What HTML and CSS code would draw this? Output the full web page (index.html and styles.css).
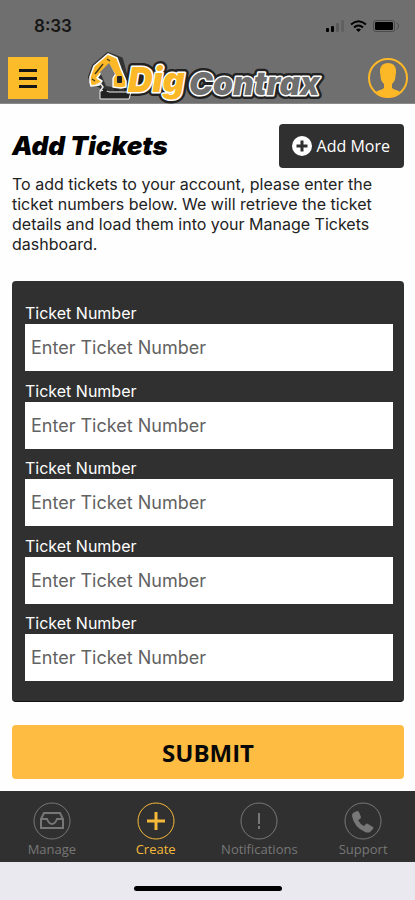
FILE: index.html
```html
<!DOCTYPE html>
<html lang="en">
<head>
<meta charset="utf-8">
<meta name="viewport" content="width=device-width, initial-scale=1">
<title>Add Tickets</title>
<link rel="stylesheet" href="styles.css">
</head>
<body>
<header class="header">
  <div class="status">
    <span class="time">8:33</span>
    <svg class="status-icons" viewBox="0 0 76 16" aria-hidden="true">
      <rect x="1" y="10" width="3" height="4" rx="1"/>
      <rect x="6" y="8" width="3" height="6" rx="1"/>
      <rect x="11" y="5" width="3" height="9" rx="1" fill="#5a5a5a"/>
      <rect x="16" y="2" width="3" height="12" rx="1" fill="#606060"/>
      <g fill="none" stroke="#000" stroke-width="2"><path d="M26 6.500q7.500-6.500 15 0"/><path d="M29 9.500q4.500-4 9 0"/></g>
      <path d="M31 11.500q2.500-2 5 0L33.500 14z"/>
      <rect x="48.500" y="2.500" width="21" height="11" rx="2" fill="none" stroke="#4c4c4c"/>
      <rect x="50" y="4" width="18" height="8" rx="1"/>
      <path d="M71.500 4.500q4 3.500 0 7" fill="none" stroke="#4c4c4c"/>
    </svg>
  </div>
  <div class="brand-bar">
    <button class="menu" type="button" aria-label="Menu">
      <svg viewBox="0 0 40 42"><path d="M11 13.500h18M11 21.500h18M11 29.500h18" stroke="#151515" stroke-width="3"/></svg>
    </button>
    <svg class="logo" viewBox="0 0 244 52" role="img" aria-label="DigContrax">
      <g stroke-linejoin="round">
        <path d="M4 25L8 14 22 2l13 5 7 26v10H16v-8l-10-6z" fill="#333" stroke="#333" stroke-width="4"/>
      </g>
      <g class="logo-outline"><text x="42" y="40" class="logo-dig">Dig</text><text x="103" y="43" class="logo-contrax">Contrax</text></g>
      <g stroke-linejoin="round">
        <path d="M14 39l5-1 4 2h22l-2 7H14z" fill="#222" stroke="#eee" stroke-width="1"/>
        <path d="M4 25L8 14 22 2l9 4 4 11 5 12v6l-5 1-8-1v-9l2-3-6-10-9 9-3 4 5 3-3 4-8 1-1-4z" fill="#fcb827" stroke="#fff" stroke-width="1.500"/>
        <path d="M14 20l9-9 6 11-3 4v9l-6-1-2-5z" fill="#777"/>
        <path d="M9 22l8-10M21 7l3 2M6 27l3 2" fill="none" stroke="#4a3b1d" stroke-width="1.500"/>
        <path d="M32 25h3v5h-3z" fill="#222" stroke="#222" stroke-width="2"/>
        <path d="M10 33l4-2 3 4-3 4" fill="none" stroke="#eee" stroke-width="1.500"/>
        <path d="M17 37h4v2h-4zM28 37h5v2h-5z" fill="#222"/>
      </g>
      <text x="42" y="40" class="logo-dig">Dig</text>
      <text x="103" y="43" class="logo-contrax">Contrax</text>
    </svg>
    <button class="profile" type="button" aria-label="Profile">
      <svg viewBox="0 0 42 42"><circle cx="21" cy="21" r="19" fill="none" stroke="#fcb827" stroke-width="2"/><path d="M21 6c-6 0-8 4-8 8 0 2 0 3 .5 4 0 5 1.500 7 3.500 9v4c-2 2-6 2-8 4q5 5 12 5t12-5c-2-2-6-2-8-4v-4c2-2 3.500-4 3.500-9 .500-1 .500-2 .500-4 0-4-2-8-8-8z" fill="#fcb827"/></svg>
    </button>
  </div>
</header>
<main class="main">
  <div class="title-row">
    <h1>Add Tickets</h1>
    <button class="add" type="button">
      <svg viewBox="0 0 20 20"><circle cx="10" cy="10" r="10" fill="#fff"/><path d="M10 4.500v11M4.500 10h11" stroke="#303030" stroke-width="3"/></svg>
      Add More
    </button>
  </div>
  <p class="intro">To add tickets to your account, please enter the ticket numbers below. We will retrieve the ticket details and load them into your Manage Tickets dashboard.</p>
  <form class="form">
    <div class="panel">
      <div class="field"><label for="t1">Ticket Number</label><input id="t1" type="text" placeholder="Enter Ticket Number"></div>
      <div class="field"><label for="t2">Ticket Number</label><input id="t2" type="text" placeholder="Enter Ticket Number"></div>
      <div class="field"><label for="t3">Ticket Number</label><input id="t3" type="text" placeholder="Enter Ticket Number"></div>
      <div class="field"><label for="t4">Ticket Number</label><input id="t4" type="text" placeholder="Enter Ticket Number"></div>
      <div class="field"><label for="t5">Ticket Number</label><input id="t5" type="text" placeholder="Enter Ticket Number"></div>
    </div>
    <button class="submit" type="submit">SUBMIT</button>
  </form>
</main>
<nav class="tabs">
  <a href="#manage"><svg viewBox="0 0 38 38"><circle cx="19" cy="19" r="18"/><path d="M8 17l3-6h16l3 6v9H8zM8 17h6q2 5 5 5t5-5h6" stroke-width="2"/></svg>Manage</a>
  <a href="#create" class="active" aria-current="page"><svg viewBox="0 0 38 38"><circle cx="19" cy="19" r="18"/><path d="M19 10v18M10 19h18" stroke-width="3"/></svg>Create</a>
  <a href="#notifications"><svg viewBox="0 0 38 38"><circle cx="19" cy="19" r="18"/><path d="M19 11v11M19 24v3" stroke-width="2"/></svg>Notifications</a>
  <a href="#support"><svg viewBox="0 0 38 38"><circle cx="19" cy="19" r="18"/><path class="solid" d="M9 11l4-2q1 0 2 1l2 5q0 1-1 2l-2 1q2 4 6 6l2-2q1-1 2 0l5 3q1 1 0 2l-3 3q-2 1-5 0Q10 25 8 14q0-2 1-3z"/></svg>Support</a>
</nav>
<div class="home"><span></span></div>
</body>
</html>
```
FILE: styles.css
```css
* { box-sizing: border-box; }
body {
  margin: 0;
  min-height: 100vh;
  display: flex;
  flex-direction: column;
  background: #fefefe;
  color: #222;
  font-family: Inter, "Liberation Sans", sans-serif;
}
button { border: 0; padding: 0; font: inherit; cursor: pointer; }
svg { display: block; }

.header { background: #6f6f6f; border-bottom: 1px solid #8a8a8a; }
.status {
  display: flex;
  justify-content: space-between;
  align-items: center;
  height: 52px;
  padding: 0 14px 0 34px;
}
.time { font-size: 17px; font-weight: 600; color: #151515; }
.status-icons { width: 76px; height: 16px; }
.brand-bar {
  display: flex;
  justify-content: space-between;
  align-items: center;
  height: 51px;
  padding: 0 6px 0 8px;
}
.menu { width: 40px; height: 42px; background: #fcbc2a; }
.logo { width: 244px; height: 52px; }
.logo text {
  font-family: Inter, sans-serif;
  font-weight: 900;
  font-style: italic;
  paint-order: stroke;
  stroke-linejoin: round;
  stroke: #fff;
  stroke-width: 3px;
}
.logo .logo-dig { font-size: 34px; fill: #fcb827; }
.logo .logo-contrax { font-size: 32px; fill: #6f6f6f; }
.logo .logo-outline text { stroke: #222; stroke-width: 8px; }
.profile { width: 42px; height: 42px; background: none; }

.main {
  flex: 1;
  display: flex;
  flex-direction: column;
  padding: 20px 11px 12px 12px;
}
.title-row { display: flex; justify-content: space-between; align-items: center; }
h1 {
  margin: 0;
  font-size: 26px;
  line-height: 44px;
  font-weight: 900;
  font-style: italic;
  color: #000;
}
.add {
  display: flex;
  align-items: center;
  gap: 5px;
  height: 44px;
  padding: 0 14px 0 13px;
  border-radius: 4px;
  background: #303030;
  color: #fff;
  font-family: "Open Sans", sans-serif;
  font-size: 16px;
}
.add svg { width: 20px; height: 20px; }
.intro { margin: 6px 20px 27px 0; font-size: 16px; line-height: 20px; }
.form { flex: 1; display: flex; flex-direction: column; gap: 23px; }
.panel {
  flex: 1;
  display: flex;
  flex-direction: column;
  justify-content: space-between;
  gap: 8px;
  padding: 22px 11px 20px 13px;
  border-radius: 4px;
  background: #303030;
  border-bottom: 1px solid #111;
}
.field { display: flex; flex-direction: column; }
.field label { color: #fff; font-size: 16px; line-height: 21px; }
.field input {
  width: 100%;
  height: 47px;
  padding: 0 6px;
  border: 0;
  border-radius: 0;
  background: #fff;
  color: #222;
  font-family: inherit;
  font-size: 18px;
}
.field input::placeholder { color: #626262; opacity: 1; }
.submit {
  height: 54px;
  border-radius: 4px;
  background: #ffbc42;
  color: #080808;
  font-family: "Open Sans", sans-serif;
  font-size: 24px;
  font-weight: 700;
}

.tabs {
  display: grid;
  grid-template-columns: repeat(4, 1fr);
  height: 71px;
  padding-top: 11px;
  background: #303030;
}
.tabs a {
  display: flex;
  flex-direction: column;
  align-items: center;
  color: #777;
  font-family: "Open Sans", sans-serif;
  font-size: 13px;
  line-height: 18px;
  text-decoration: none;
}
.tabs .active { color: #f5b93a; }
.tabs svg { width: 38px; height: 38px; fill: none; stroke: currentColor; stroke-width: 1; }
.tabs .solid { fill: currentColor; stroke: none; }
.home { display: flex; justify-content: center; height: 38px; padding-top: 24px; background: #e9e9ef; }
.home span { width: 148px; height: 5px; border-radius: 3px; background: #000; }
```
